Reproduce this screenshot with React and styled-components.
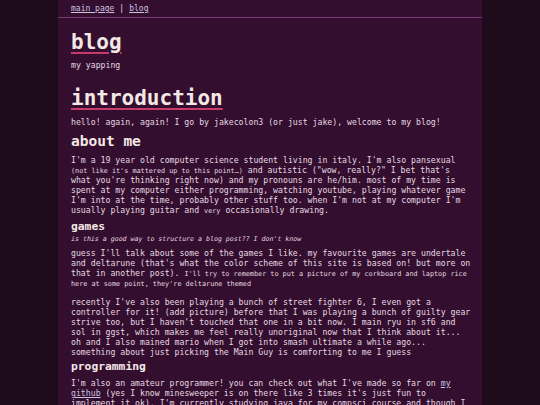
import styled, { createGlobalStyle } from 'styled-components';

const GlobalCss = createGlobalStyle`
  * {
    margin: 0;
    padding: 0;
    box-sizing: border-box;
  }

  body {
    background-color: #1d0a1b;
    font-family: "DejaVu Sans Mono", "Liberation Mono", monospace;
    color: #e6d9e2;
  }
`;

const colors = {
  page: '#1d0a1b',
  column: '#330e2e',
  border: '#7a3a6f',
  heading: '#f4e8e6',
  text: '#e6d9e2',
  accent: '#c73b6c',
  link: '#cbc4e2',
};

const Column = styled.div`
  width: 424px;
  margin: 0 auto;
  min-height: 405px;
  background-color: ${colors.column};
`;

const Header = styled.header`
  display: flex;
  align-items: center;
  gap: 5px;
  height: 18px;
  padding: 0 13px 1px;
  border-bottom: 1px solid ${colors.border};
  font-size: 8px;
  color: ${colors.text};
`;

const NavLink = styled.a`
  color: ${colors.link};
  text-decoration: underline;
`;

const Main = styled.main`
  padding: 10px 9px 10px 13px;
  font-size: 8.2px;
  line-height: 10px;
`;

const Title = styled.h1`
  font-size: 21px;
  line-height: 28px;
  font-weight: bold;
  color: ${colors.heading};
  text-decoration: underline;
  text-decoration-color: ${colors.accent};
  text-decoration-thickness: 2px;
  text-underline-offset: 3px;
  margin-top: ${({ $top }) => $top || 0}px;
`;

const Subtitle = styled.p`
  margin-top: 4px;
`;

const SectionTitle = styled.h2`
  font-size: ${({ $size }) => $size}px;
  line-height: ${({ $size }) => Math.round($size * 1.3)}px;
  font-weight: bold;
  color: ${colors.heading};
  margin-top: ${({ $top }) => $top || 0}px;
`;

const Para = styled.p`
  margin-top: ${({ $top }) => $top || 0}px;
`;

const Small = styled.span`
  font-size: 6.8px;
  line-height: 1;
`;

const Note = styled.p`
  font-size: 6.6px;
  line-height: 10px;
  font-style: italic;
`;

const TextLink = styled.a`
  color: ${colors.link};
  text-decoration: underline;
`;

export default function App() {
  return (
    <>
      <GlobalCss />
      <Column>
        <Header>
          <NavLink href="#">main page</NavLink>
          <span>|</span>
          <NavLink href="#">blog</NavLink>
        </Header>
        <Main>
          <Title>blog</Title>
          <Subtitle>my yapping</Subtitle>
          <Title $top={14}>introduction</Title>
          <Para $top={5}>hello! again, again! I go by jakecolon3 (or just jake), welcome to my blog!</Para>
          <SectionTitle $size={14.5} $top={5}>about me</SectionTitle>
          <Para $top={4}>
            I'm a 19 year old computer science student living in italy. I'm also pansexual{' '}
            <Small>(not like it's mattered up to this point…)</Small> and autistic ("wow, really?" I bet that's
            what you're thinking right now) and my pronouns are he/him. most of my time is spent at my computer
            either programming, watching youtube, playing whatever game I'm into at the time, probably other stuff
            too. when I'm not at my computer I'm usually playing guitar and <Small>very</Small> occasionally drawing.
          </Para>
          <SectionTitle $size={11.3} $top={4}>games</SectionTitle>
          <Note>is this a good way to structure a blog post?? I don't know</Note>
          <Para $top={4}>
            guess I'll talk about some of the games I like. my favourite games are undertale and deltarune (that's
            what the color scheme of this site is based on! but more on that in another post).{' '}
            <Small>
              I'll try to remember to put a picture of my corkboard and laptop rice here at some point, they're
              deltarune themed
            </Small>
          </Para>
          <Para $top={9}>
            recently I've also been playing a bunch of street fighter 6, I even got a controller for it! (add
            picture) before that I was playing a bunch of guilty gear strive too, but I haven't touched that one in
            a bit now. I main ryu in sf6 and sol in ggst, which makes me feel really unoriginal now that I think
            about it... oh and I also mained mario when I got into smash ultimate a while ago... something about
            just picking the Main Guy is comforting to me I guess
          </Para>
          <SectionTitle $size={11.3} $top={2}>programming</SectionTitle>
          <Para $top={4}>
            I'm also an amateur programmer! you can check out what I've made so far on{' '}
            <TextLink href="#">my github</TextLink> (yes I know minesweeper is on there like 3 times it's just fun
            to implement it ok). I'm currently studying java for my compsci course and though I
          </Para>
        </Main>
      </Column>
    </>
  );
}
